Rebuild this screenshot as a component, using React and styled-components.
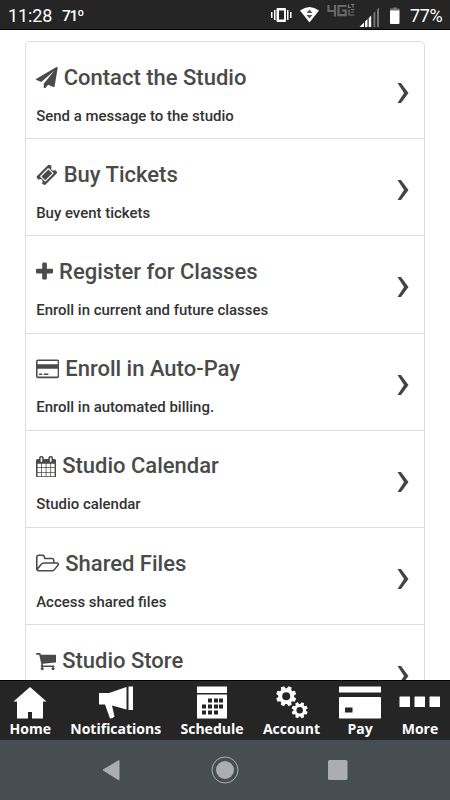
import styled, { createGlobalStyle } from 'styled-components';

const GlobalStyle = createGlobalStyle`
  * {
    box-sizing: border-box;
  }
  body {
    margin: 0;
    background: #fff;
    font-family: Roboto, 'Liberation Sans', sans-serif;
  }
`;

const Screen = styled.div`
  display: flex;
  flex-direction: column;
  width: 450px;
  height: 800px;
  overflow: hidden;
`;

const StatusBar = styled.header`
  display: flex;
  align-items: center;
  flex: none;
  height: 30px;
  padding: 3px 6px 0 8px;
  background: #252525;
  border-bottom: 1px solid #000;
  color: #fff;
`;

const Clock = styled.span`
  width: 54px;
  font-size: 18px;
  line-height: 26px;
  letter-spacing: -0.1px;
`;

const Temperature = styled.span`
  font-size: 15.5px;
  font-weight: 500;
  line-height: 26px;
  letter-spacing: -1.2px;
`;

const StatusIcons = styled.div`
  display: flex;
  margin-left: auto;
  svg {
    display: block;
    margin-top: -2px;
  }
`;

const Battery = styled.span`
  width: 34px;
  margin-left: 9px;
  font-size: 18px;
  line-height: 26px;
  letter-spacing: -0.4px;
`;

const Content = styled.main`
  flex: 1;
  min-height: 0;
  overflow: hidden;
  padding: 11px 25px 0;
`;

const Menu = styled.ul`
  margin: 0;
  padding: 0;
  list-style: none;
  border: 1px solid #ddd;
  border-radius: 5px;
`;

const MenuItem = styled.li`
  display: flex;
  align-items: flex-start;
  justify-content: space-between;
  height: 97.2px;
  padding: 22.6px 15px 0 10.2px;
  border-bottom: 1px solid #ddd;
`;

const Title = styled.h2`
  display: flex;
  align-items: center;
  gap: 5.8px;
  height: 26px;
  margin: 0 0 15px;
  color: #4a4a4a;
  font-size: 22px;
  font-weight: 500;
  line-height: 26px;
  white-space: nowrap;
  svg {
    display: block;
    flex: none;
    height: 21.7px;
    fill: #4a4a4a;
  }
`;

const Description = styled.p`
  margin: 0;
  color: #333;
  font-size: 14.95px;
  font-weight: 500;
  line-height: 20px;
  white-space: nowrap;
`;

const Chevron = styled.svg`
  display: block;
  width: 12px;
  height: 20px;
  margin-top: 18.5px;
  fill: #444;
`;

const TabBar = styled.nav`
  display: flex;
  flex: none;
  height: 60px;
  background: #252525;
  border-top: 1px solid #000;
`;

const Tab = styled.a`
  display: flex;
  flex-direction: column;
  align-items: center;
  width: ${props => props.width}px;
  padding-top: 4px;
  color: #fff;
  font-family: 'Open Sans', sans-serif;
  font-size: 14px;
  font-weight: 700;
  line-height: 20px;
  white-space: nowrap;
  svg {
    display: block;
    flex: none;
  }
`;

const SystemBar = styled.footer`
  display: flex;
  align-items: center;
  justify-content: center;
  flex: none;
  gap: 84px;
  height: 60px;
  background: #464e54;
`;

const items = [
  {
    title: 'Contact the Studio',
    text: 'Send a message to the studio',
    start: 0,
    width: 1792,
    path: 'M1764 11q33 24 27 64l-256 1536q-5 29-32 45-14 8-31 8-11 0-24-5l-453-185-242 295q-18 23-49 23-13 0-22-4-19-7-30.500-23.500t-11.500-36.500v-349l864-1059-1069 925-395-162q-37-14-40-55-2-40 32-59l1664-960q15-9 32-9 20 0 36 11z',
  },
  {
    title: 'Buy Tickets',
    text: 'Buy event tickets',
    start: 0,
    width: 1792,
    path: 'M1024 452l316 316-572 572-316-316zm-211 979l618-618q19-19 19-45t-19-45l-362-362q-18-18-45-18t-45 18l-618 618q-19 19-19 45t19 45l362 362q18 18 45 18t45-18zm889-637l-907 908q-37 37-90.500 37t-90.500-37l-126-126q56-56 56-136t-56-136-136-56-136 56l-125-126q-37-37-37-90.500t37-90.500l907-906q37-37 90.500-37t90.500 37l125 125q-56 56-56 136t56 136 136 56 136-56l126 125q37 37 37 90.500t-37 90.500z',
  },
  {
    title: 'Register for Classes',
    text: 'Enroll in current and future classes',
    start: 192,
    width: 1408,
    path: 'M1600 736v192q0 40-28 68t-68 28h-416v416q0 40-28 68t-68 28h-192q-40 0-68-28t-28-68v-416h-416q-40 0-68-28t-28-68v-192q0-40 28-68t68-28h416v-416q0-40 28-68t68-28h192q40 0 68 28t28 68v416h416q40 0 68 28t28 68z',
  },
  {
    title: 'Enroll in Auto-Pay',
    text: 'Enroll in automated billing.',
    start: 0,
    width: 1920,
    path: 'M1760 128q66 0 113 47t47 113v1216q0 66-47 113t-113 47h-1600q-66 0-113-47t-47-113v-1216q0-66 47-113t113-47h1600zm-1600 128q-13 0-22.500 9.500t-9.500 22.500v224h1664v-224q0-13-9.500-22.500t-22.500-9.500h-1600zm1600 1280q13 0 22.500-9.500t9.500-22.500v-608h-1664v608q0 13 9.500 22.500t22.500 9.500h1600zm-1504-128v-128h256v128h-256zm384 0v-128h384v128h-384z',
  },
  {
    title: 'Studio Calendar',
    text: 'Studio calendar',
    start: 64,
    width: 1664,
    path: 'M192 1664h288v-288h-288v288zm352 0h320v-288h-320v288zm-352-352h288v-320h-288v320zm352 0h320v-320h-320v320zm-352-384h288v-288h-288v288zm736 736h320v-288h-320v288zm-384-736h320v-288h-320v288zm768 736h288v-288h-288v288zm-384-352h320v-320h-320v320zm-352-864v-288q0-13-9.500-22.500t-22.500-9.500h-64q-13 0-22.500 9.500t-9.500 22.500v288q0 13 9.500 22.500t22.500 9.500h64q13 0 22.500-9.500t9.500-22.500zm736 864h288v-320h-288v320zm-384-384h320v-288h-320v288zm384 0h288v-288h-288v288zm32-480v-288q0-13-9.500-22.500t-22.500-9.500h-64q-13 0-22.500 9.500t-9.500 22.500v288q0 13 9.500 22.500t22.500 9.500h64q13 0 22.500-9.500t9.500-22.500zm384-64v1280q0 52-38 90t-90 38h-1408q-52 0-90-38t-38-90v-1280q0-52 38-90t90-38h128v-96q0-66 47-113t113-47h64q66 0 113 47t47 113v96h384v-96q0-66 47-113t113-47h64q66 0 113 47t47 113v96h128q52 0 90 38t38 90z',
  },
  {
    title: 'Shared Files',
    text: 'Access shared files',
    start: 64,
    width: 1920,
    path: 'M1845 931q0-35-53-35h-1088q-40 0-85.500 21.500t-71.500 52.500l-294 363q-18 24-18 40 0 35 53 35h1088q40 0 86-22t71-53l294-363q18-22 18-39zm-1141-163h768v-160q0-40-28-68t-68-28h-576q-40 0-68-28t-28-68v-64q0-40-28-68t-68-28h-320q-40 0-68 28t-28 68v853l256-315q44-53 116-87.500t140-34.500zm1269 163q0 62-46 120l-295 363q-43 53-116 87.500t-140 34.500h-1088q-92 0-158-66t-66-158v-960q0-92 66-158t158-66h320q92 0 158 66t66 158v32h544q92 0 158 66t66 158v160h192q54 0 99 24.500t67 70.500q15 32 15 68z',
  },
  {
    title: 'Studio Store',
    start: 64,
    width: 1664,
    path: 'M704 1536q0 52-38 90t-90 38-90-38-38-90 38-90 90-38 90 38 38 90zm896 0q0 52-38 90t-90 38-90-38-38-90 38-90 90-38 90 38 38 90zm128-1088v512q0 24-16.500 42.500t-40.500 21.500l-1044 122q13 60 13 70 0 16-24 64h920q26 0 45 19t19 45-19 45-45 19h-1024q-26 0-45-19t-19-45q0-11 8-31.500t16-36 21.500-40 15.500-29.500l-177-823h-204q-26 0-45-19t-19-45 19-45 45-19h256q16 0 28.500 6.500t19.500 15.500 13 24.500 8 26 5.500 29.500 4.500 26h1201q26 0 45 19t19 45z',
  },
];

const MenuIcon = ({ start, width, path }) => (
  <svg width={(width * 21.7) / 1792} viewBox={`${start} 0 ${width} 1792`}>
    <path d={path} />
  </svg>
);

// Outline of a toothed wheel centred on cx, cy
const gearPath = (cx, cy, outer, inner) => {
  const points = [];
  for (let i = 0; i < 8; i++) {
    const a = (i * Math.PI) / 4 + Math.PI / 8;
    [
      [-0.29, inner],
      [-0.17, outer],
      [0.17, outer],
      [0.29, inner],
    ].forEach(([d, r]) => {
      points.push(
        `${(cx + r * Math.cos(a + d)).toFixed(2)} ${(cy + r * Math.sin(a + d)).toFixed(2)}`
      );
    });
  }
  return `M${points.join('L')}Z`;
};

const HomeIcon = () => (
  <svg width="34" height="34" fill="#fff">
    <path d="M17 2L33.500 16.500H30V33.500H19V27H15V33.500H4V16.500H0.500Z" />
  </svg>
);

const MegaphoneIcon = () => (
  <svg width="36" height="34" fill="#fff">
    <path d="M1 8H11L28.500 2V24.500L14 20.500L16.500 31.500Q15 33.500 12 33.500L7 19.500H1Z" />
    <path d="M30.500 1.500H35V25H30.500Z" />
  </svg>
);

const ScheduleIcon = () => (
  <svg width="30" height="34">
    <path fill="#fff" d="M0 1.500H30V8H0ZM0 9.500H30V33.500H0Z" />
    <g fill="#252525">
      <path d="M11 13.500h4v4h-4zM17 13.500h4v4h-4zM22 13.500h4v4h-4z" />
      <path d="M5 19.500h4v4h-4zM11 19.500h4v4h-4zM17 19.500h4v4h-4zM22 19.500h4v4h-4z" />
      <path d="M5 25.500h4v4h-4zM11 25.500h4v4h-4zM17 25.500h4v4h-4z" />
    </g>
  </svg>
);

const GearsIcon = () => (
  <svg width="32" height="34">
    <path fill="#fff" d={gearPath(10.2, 11.2, 10.2, 7.9)} />
    <path fill="#fff" d={gearPath(23.7, 25.2, 8.2, 6.3)} />
    <circle cx="10.2" cy="11.2" r="4" fill="#252525" />
    <circle cx="23.7" cy="25.2" r="3.2" fill="#252525" />
  </svg>
);

const CardIcon = () => (
  <svg width="42" height="34">
    <rect y="1.500" width="42" height="6" rx="0.500" fill="#fff" />
    <rect y="12" width="42" height="21.500" rx="1" fill="#fff" />
    <rect x="6" y="22.500" width="7.500" height="5" fill="#252525" />
  </svg>
);

const MoreIcon = () => (
  <svg width="42" height="34" fill="#fff">
    <rect x="0.500" y="11.500" width="10.500" height="10.500" rx="0.500" />
    <rect x="15.500" y="11.500" width="10.500" height="10.500" rx="0.500" />
    <rect x="30.500" y="11.500" width="10.500" height="10.500" rx="0.500" />
  </svg>
);

const tabs = [
  { label: 'Home', icon: HomeIcon, width: 60.5 },
  { label: 'Notifications', icon: MegaphoneIcon, width: 110.5 },
  { label: 'Schedule', icon: ScheduleIcon, width: 82 },
  { label: 'Account', icon: GearsIcon, width: 77 },
  { label: 'Pay', icon: CardIcon, width: 60 },
  { label: 'More', icon: MoreIcon, width: 60 },
];

const App = () => (
  <>
    <GlobalStyle />
    <Screen>
      <StatusBar>
        <Clock>11:28</Clock>
        <Temperature>71º</Temperature>
        <StatusIcons>
          <svg width="130" height="29" viewBox="271 1 130 29">
            <g fill="#fff">
              <path d="M271 12h1.500v6H271zM274 10h1.500v10H274zM287 10h1.500v10H287zM290 12h1.500v6H290z" />
              <path
                fillRule="evenodd"
                d="M277.500 8h7.500q1 0 1 1v12q0 1-1 1h-7.500q-1 0-1-1V9q0-1 1-1zm1.500 2.500v9h5v-9z"
              />
              <path d="M300 10.500Q309.500 3.500 319 10.500L309.500 22.500Z" />
              <path d="M390 10h9.500v13q0 1-1 1h-7.500q-1 0-1-1z" />
            </g>
            <path fill="#555" d="M306.500 13l3-3.500 3 3.500zM306.500 15h6l-3 3.500z" />
            <path
              d="M328.500 5v6h7.500M335 5v11.500M346.500 6h-8v9.200h7.200v-4.700H342"
              fill="none"
              stroke="#686868"
              strokeWidth="2.200"
            />
            <path
              d="M348.500 4.500v3h2.500M351 4.500h3.500M353 4.500v3M349 9.500v5.500h5.500M351 9.500h3.500M351 12h3"
              fill="none"
              stroke="#777"
              strokeWidth="1.200"
            />
            <path
              fill="#fff"
              d="M359.500 27l4.500-4.500v4.500zM365 21.500l2.500-2.500v8h-2.500zM368.700 18l2.500-2.500v11.500h-2.500z"
            />
            <path
              fill="#777"
              d="M377 9.500l2-2v19.500h-2zM373.500 13l1.800-1.800v15.800h-1.800zM393 7.500h4V8.500h2.500v2H390v-2h3z"
            />
          </svg>
        </StatusIcons>
        <Battery>77%</Battery>
      </StatusBar>

      <Content>
        <Menu>
          {items.map(item => (
            <MenuItem key={item.title}>
              <div>
                <Title>
                  <MenuIcon {...item} />
                  {item.title}
                </Title>
                {item.text && <Description>{item.text}</Description>}
              </div>
              <Chevron viewBox="0 0 12 20">
                <path d="M0.500 0H4L11.500 10L4 20H0.500L7 10Z" />
              </Chevron>
            </MenuItem>
          ))}
        </Menu>
      </Content>

      <TabBar>
        {tabs.map(({ label, icon: Icon, width }) => (
          <Tab key={label} width={width}>
            <Icon />
            {label}
          </Tab>
        ))}
      </TabBar>

      <SystemBar>
        <svg width="30" height="30">
          <path
            d="M6 15L22 5.500V25Z"
            fill="#aaaeb2"
            stroke="#aaaeb2"
            strokeLinejoin="round"
          />
        </svg>
        <svg width="28" height="28">
          <circle cx="14" cy="14" r="13" fill="none" stroke="#aaaeb2" />
          <circle cx="14" cy="14" r="9" fill="#aaaeb2" />
        </svg>
        <svg width="30" height="30">
          <rect x="5" y="5" width="19.500" height="20" rx="1.500" fill="#aaaeb2" />
        </svg>
      </SystemBar>
    </Screen>
  </>
);

export default App;
